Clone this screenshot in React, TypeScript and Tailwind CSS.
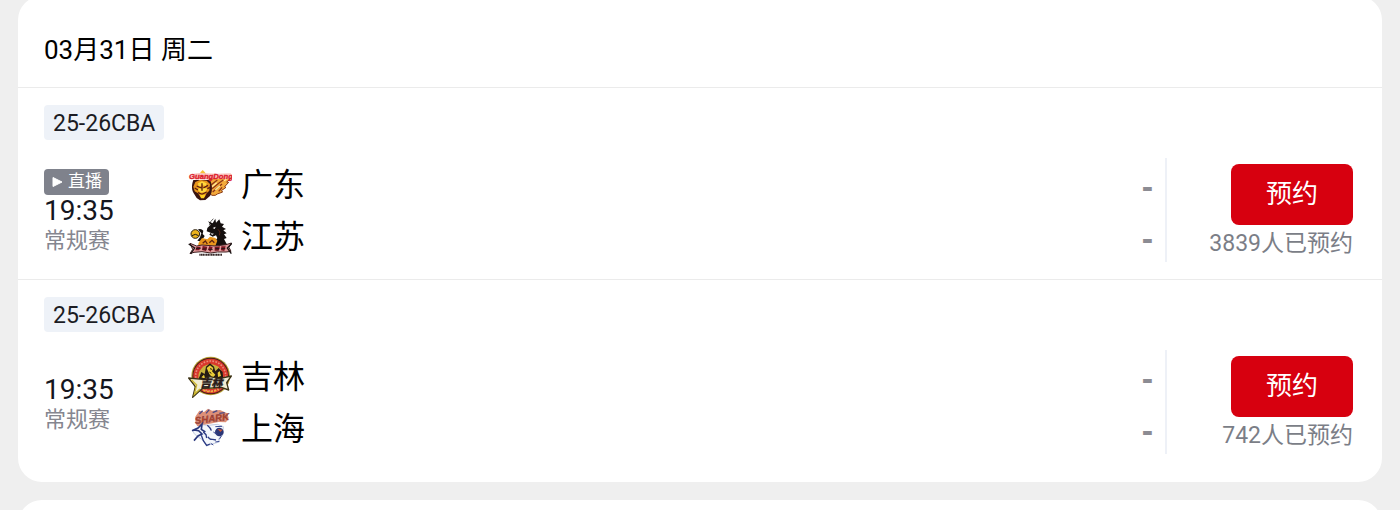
import type { ReactNode } from "react";

function GuangdongLogo() {
  return (
    <svg viewBox="24 6 132 132" className="size-11 shrink-0" role="img" aria-label="广东队徽">
      <path d="M86 60 L108 52 L154 50 L150 58 L140 66 L146 67 L134 80 L138 82 L124 92 L128 96 L112 102 L106 106 L96 106 L86 98Z" fill="#f3a93a" stroke="#8a3a14" strokeWidth="3" />
      <path d="M94 74 L112 60 M96 86 L118 68 L130 60 M98 96 L112 84 L126 72 M116 94 L126 82" fill="none" stroke="#8c3416" strokeWidth="4" />
      <path d="M96 80 L110 68 M106 90 L120 77 M132 62 L144 55" fill="none" stroke="#ffeb9c" strokeWidth="4" />
      <path d="M40 60 C34 76 34 92 44 104 L50 114 L60 121 L76 120 L90 108 C98 96 98 76 90 60Z" fill="#3a1410" />
      <path d="M46 66 L60 60 L80 62 L90 72 L88 92 L80 100 L74 112 L62 112 L54 100 L44 94 L40 80Z" fill="#e8941c" />
      <path d="M54 70 L66 64 L80 70 L78 78 L68 76 L56 80Z M52 88 L66 82 L82 86 L76 96 L62 98Z" fill="#ffd83c" />
      <path d="M50 78 L64 84 M70 84 L84 76 M66 70 L66 92 M54 98 L66 103 L80 96 M44 84 L54 90 M82 86 L90 82" stroke="#5a1c10" strokeWidth="4" fill="none" />
      <path d="M60 104 L76 104 L72 115 L63 115Z" fill="#ffd020" />
      <path d="M62 36 L68 30 L74 36 L80 44 L58 44Z" fill="#f7c23a" />
      <path d="M28 57 L40 41 L60 39 L110 41 L152 40 L157 45 L150 56 L100 56 L64 58Z" fill="#fbc4be" />
      <text x="27" y="56" fontSize="23" fontWeight="900" fontStyle="italic" fill="#dc1c2c" stroke="#dc1c2c" strokeWidth="1" fontFamily="Liberation Sans, sans-serif">GuangDong</text>
    </svg>
  );
}

function JiangsuLogo() {
  return (
    <svg viewBox="24 12 132 132" className="size-11 shrink-0" role="img" aria-label="江苏队徽">
      <path d="M82 54 L92 44 L84 34 L98 40 L106 26 L108 38 L118 28 L122 40 L132 42 L126 50 L138 57 L130 61 L140 70 L132 73 L140 84 L132 87 L138 98 L142 104 L104 108 L106 92 L112 84 L108 76 L98 80 L88 74 L92 68 L80 64Z" fill="#15100f" />
      <path d="M98 54 L107 50 L104 57Z M92 70 L102 71 L96 75Z" fill="#fff" />
      <path d="M114 58 L120 66 L118 76" fill="none" stroke="#7c2a18" strokeWidth="2" />
      <path d="M88 46 Q90 34 100 26" fill="none" stroke="#15100f" strokeWidth="2" />
      <circle cx="46" cy="72" r="13" fill="#ebb31d" stroke="#2b2012" strokeWidth="3" />
      <path d="M36 77 Q46 69 56 77" fill="none" stroke="#1b1612" strokeWidth="3" />
      <path d="M54 58 Q64 54 70 62 L68 72 L74 78 L68 88 L60 94 L52 92 L60 82 L64 70Z" fill="#15100f" />
      <path d="M56 98 L66 84 L82 88 L90 80 L106 84 L112 92 L106 108 L54 108Z" fill="#e9961c" />
      <path d="M68 100 L76 93 L82 102 M88 98 L96 91 L103 98" fill="none" stroke="#5b2210" strokeWidth="4" />
      <path d="M30 100 L50 108 L66 105 L106 108 L138 104 L154 99 L147 112 L153 124 L138 126 L112 126 L92 129 L66 125 L42 127 L30 131 L38 118Z" fill="#e39c9e" stroke="#402021" strokeWidth="3" />
      <path d="M26 102 L44 114 L32 132 M156 100 L142 114 L154 131" fill="none" stroke="#1c1616" strokeWidth="4" />
      <path d="M50 110 L62 110 L58 121 L46 121Z M68 108 L82 110 L78 123 L66 120Z M88 108 L98 112 L92 125 L84 119Z M104 111 L120 109 L116 122 L104 122Z M124 109 L137 109 L133 123 L123 121Z" fill="#7c1420" />
      <path d="M48 115 H62 M68 117 H80 M86 118 H98 M106 116 H118 M124 116 H136" stroke="#211718" strokeWidth="3" />
      <path d="M58 134 H126" stroke="#3a2a2a" strokeWidth="6" strokeDasharray="4 1" />
    </svg>
  );
}

function JilinLogo() {
  return (
    <svg viewBox="24 12 132 132" className="size-11 shrink-0" role="img" aria-label="吉林队徽">
      <circle cx="92" cy="78" r="58" fill="#b9a237" />
      <circle cx="92" cy="78" r="55" fill="#4d1a18" />
      <circle cx="92" cy="78" r="52" fill="#d8382c" />
      <circle cx="92" cy="78" r="45" fill="none" stroke="#e98a7a" strokeWidth="5" strokeDasharray="5 4" />
      <circle cx="92" cy="80" r="37" fill="#c7b23d" />
      <path d="M56 86 L64 66 L74 72 L78 50 L90 40 L102 50 L106 64 L116 54 L128 66 L130 90 L90 102 L60 96Z" fill="#241a14" />
      <path d="M80 54 L90 46 L100 54 L96 64 L106 74 L98 84 L88 72Z M64 82 L72 74 L76 86Z M113 68 L119 63 L123 78 L114 81Z" fill="#e9cd38" />
      <path d="M90 56 L96 58 M88 66 L94 70" stroke="#241a14" strokeWidth="3" />
      <path d="M26 84 L66 88 L90 80 L118 86 L154 78 L140 98 L146 120 L124 112 L66 116 L38 142 L46 110Z" fill="#f1ecd0" stroke="#3c3214" strokeWidth="4" strokeLinejoin="round" />
      <path d="M34 89 L50 105 L43 133 L60 117" fill="none" stroke="#cbb62f" strokeWidth="4" />
      <text x="60" y="111" fontSize="34" fontWeight="900" fontStyle="italic" fill="#2b1d1a" stroke="#2b1d1a" strokeWidth="1" fontFamily="Noto Sans CJK SC, sans-serif">吉林</text>
      <path d="M70 121 Q92 129 116 119" fill="none" stroke="#f0b53a" strokeWidth="5" strokeDasharray="7 4" />
    </svg>
  );
}

function ShanghaiLogo() {
  return (
    <svg viewBox="24 6 132 132" className="size-11 shrink-0" role="img" aria-label="上海队徽">
      <path d="M46 38 L58 20 L72 24 L84 14 L96 20 L120 18 L142 28 L146 42 L138 55 L116 54 L86 60 L52 67 L46 56Z" fill="#dd9078" />
      <path d="M58 30 L68 20 M78 28 L88 17 M98 26 L112 20 M118 28 L134 26" stroke="#4a4a86" strokeWidth="4" />
      <text x="46" y="60" fontSize="29" fontWeight="900" fontStyle="italic" fill="#bd4422" stroke="#6b3a50" strokeWidth="1" fontFamily="Liberation Sans, sans-serif" transform="rotate(-7 46 60)">SHARK</text>
      <path d="M38 78 L54 72 L64 62 L84 64 L112 61 L130 68 L128 94 L116 104 L118 114 L96 120 L80 126 L68 108 L50 96 L42 88Z" fill="#f4f7fc" stroke="#a3b0d0" strokeWidth="2" />
      <path d="M36 80 L54 72 L66 60 L64 76 L76 84 M42 78 L56 80 L66 90 L54 96 L42 110" fill="none" stroke="#29377d" strokeWidth="5" />
      <path d="M64 94 L70 110 L80 124 L90 120 M82 64 Q92 72 94 80 M84 98 Q88 107 98 106 L108 108 M70 84 L78 92 L80 102" fill="none" stroke="#2c3b84" strokeWidth="4" />
      <circle cx="118" cy="84" r="13" fill="#2b3677" />
      <path d="M113 75 L128 77 L121 84Z" fill="#cd5933" />
      <path d="M100 84 L112 92 M106 68 L126 67 M92 118 L100 123 M106 114 L118 112 M124 96 L118 106" fill="none" stroke="#394891" strokeWidth="3" />
    </svg>
  );
}

interface Team {
  name: string;
  logo: ReactNode;
}

interface Match {
  id: string;
  time: string;
  live: boolean;
  teams: Team[];
  booked: number;
}

const matches: Match[] = [
  {
    id: "gd-js",
    time: "19:35",
    live: true,
    teams: [
      { name: "广东", logo: <GuangdongLogo /> },
      { name: "江苏", logo: <JiangsuLogo /> },
    ],
    booked: 3839,
  },
  {
    id: "jl-sh",
    time: "19:35",
    live: false,
    teams: [
      { name: "吉林", logo: <JilinLogo /> },
      { name: "上海", logo: <ShanghaiLogo /> },
    ],
    booked: 742,
  },
];

function MatchItem({ match }: { match: Match }) {
  return (
    <li className="border-b border-[#ebebeb] px-[26px] py-[17px] last:border-b-0 last:pb-7">
      <span className="inline-flex h-[35px] items-center rounded bg-[#eef2f8] px-[9px] pt-1 align-top text-[23px] text-[#1b1c24]">
        25-26CBA
      </span>
      <div className="mt-[18px] flex items-stretch">
        <div className="flex w-36 shrink-0 flex-col items-start justify-center pt-1">
          {match.live && (
            <span className="flex h-[26px] items-center gap-[5px] rounded bg-[#7f828c] px-[7px] text-[17px] text-white">
              <svg viewBox="0 0 12 12" className="size-3" aria-hidden="true">
                <path d="M2 1.5 L11 6 L2 10.5Z" fill="#fff" stroke="#fff" strokeWidth="1" strokeLinejoin="round" />
              </svg>
              直播
            </span>
          )}
          <time className="text-[28px] leading-8 text-[#15161e]">{match.time}</time>
          <span className="text-[22px] leading-7 text-[#85868f]">常规赛</span>
        </div>
        <ul className="min-w-0 flex-1">
          {match.teams.map((team) => (
            <li key={team.name} className="flex h-[52px] items-center gap-[9px] pr-3">
              {team.logo}
              <span className="flex-1 pt-0.5 text-[32px] leading-[52px] text-black">{team.name}</span>
              <span className="pt-1 font-['Liberation_Sans',sans-serif] text-[34px] leading-[52px] font-bold text-[#8c8c93]">-</span>
            </li>
          ))}
        </ul>
        <div className="flex w-[191px] shrink-0 flex-col items-end border-l-2 border-[#eef1f7] pt-[6px] pr-[3px]">
          <button type="button" className="h-[61px] w-[122px] rounded-lg bg-[#d7000f] text-[26px] text-white">
            预约
          </button>
          <p className="mt-px text-[23px] leading-9 whitespace-nowrap text-[#7b7e87]">{match.booked}人已预约</p>
        </div>
      </div>
    </li>
  );
}

export default function App() {
  return (
    <main className="flex h-screen flex-col gap-[18px] overflow-hidden bg-[#efefef] px-[18px] font-['Roboto','Noto_Sans_CJK_SC',sans-serif]">
      <section className="-mt-1 shrink-0 rounded-3xl bg-white">
        <h2 className="border-b border-[#ebebeb] px-[26px] pt-[34px] pb-[17px] text-[26px] leading-10 font-normal text-black">
          03月31日 周二
        </h2>
        <ul>
          {matches.map((match) => (
            <MatchItem key={match.id} match={match} />
          ))}
        </ul>
      </section>
      <section className="h-24 shrink-0 rounded-3xl bg-white" />
    </main>
  );
}
